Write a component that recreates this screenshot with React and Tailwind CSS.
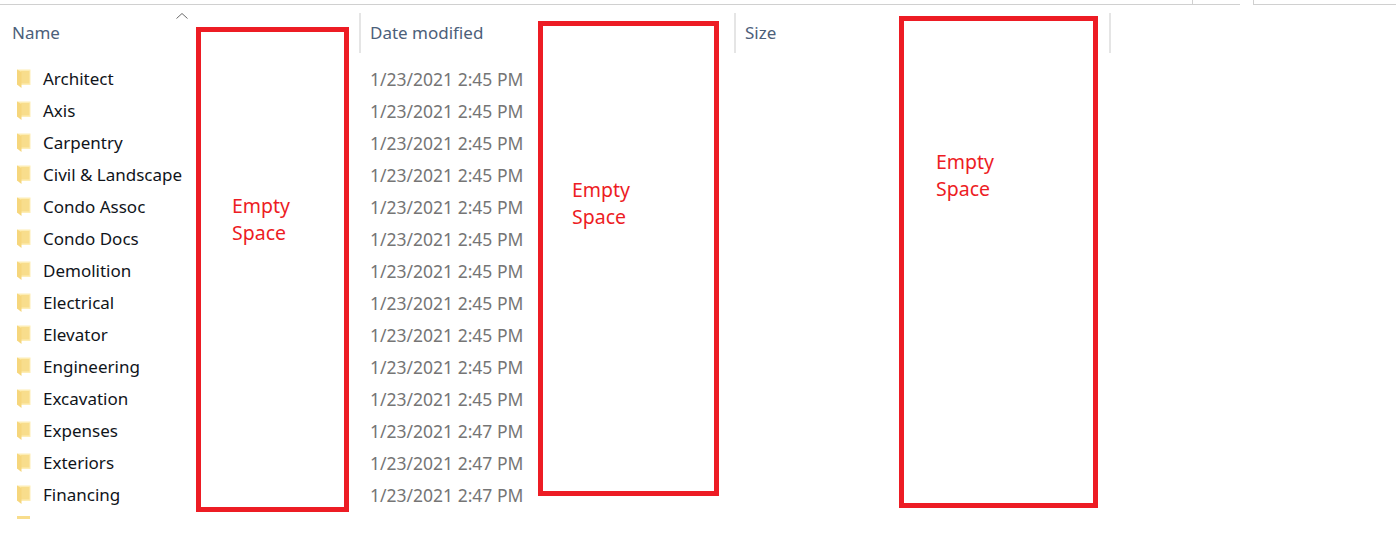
const folders = [
  ['Architect', '1/23/2021 2:45 PM'],
  ['Axis', '1/23/2021 2:45 PM'],
  ['Carpentry', '1/23/2021 2:45 PM'],
  ['Civil & Landscape', '1/23/2021 2:45 PM'],
  ['Condo Assoc', '1/23/2021 2:45 PM'],
  ['Condo Docs', '1/23/2021 2:45 PM'],
  ['Demolition', '1/23/2021 2:45 PM'],
  ['Electrical', '1/23/2021 2:45 PM'],
  ['Elevator', '1/23/2021 2:45 PM'],
  ['Engineering', '1/23/2021 2:45 PM'],
  ['Excavation', '1/23/2021 2:45 PM'],
  ['Expenses', '1/23/2021 2:47 PM'],
  ['Exteriors', '1/23/2021 2:47 PM'],
  ['Financing', '1/23/2021 2:47 PM'],
];

function FolderIcon() {
  return (
    <svg width="16" height="22" viewBox="0 0 16 22" className="shrink-0">
      <path d="M1 1.5h13.5v15.5H1z" fill="#fdedb5" />
      <path d="M5 3h8.5v12.5H5z" fill="#f8dd8c" />
      <path d="M1 1.5l4.5 2.5v16L1 16.5z" fill="#f6d67c" />
    </svg>
  );
}

function Header({ label, width, sorted }) {
  return (
    <div className={`relative flex items-center h-10 border-r-2 border-[#e5e5e5] ${width}`}>
      <span className="text-[#4c607a] text-[17px]">{label}</span>
      {sorted && (
        <svg width="14" height="8" viewBox="0 0 14 8" className="absolute left-[175px] -top-[1px]">
          <path d="M1.5 6.5L7 1.5l5.5 5" fill="none" stroke="#6b6b6b" strokeWidth="1" />
        </svg>
      )}
    </div>
  );
}

function EmptyBox({ className, noteClass }) {
  return (
    <div className={`absolute border-[5px] border-[#ed1c24] ${className}`}>
      <p className={`absolute text-[#ed1c24] text-[19.5px] leading-[27px] ${noteClass}`}>
        Empty<br />Space
      </p>
    </div>
  );
}

export default function App() {
  return (
    <div className="relative w-[1396px] h-[545px] overflow-hidden bg-white font-['Noto_Sans','Open_Sans',sans-serif]">
      {/* Top edge of the pane above */}
      <div className="flex h-[5px]">
        <div className="w-[1240px] border-b border-[#d0d0d0] flex justify-end">
          <div className="w-[48px] border-l border-[#d0d0d0]" />
        </div>
        <div className="w-[13px]" />
        <div className="flex-1 border-b border-l border-[#d0d0d0]" />
      </div>

      {/* Column headers */}
      <div className="flex mt-[8px]">
        <Header label="Name" width="w-[361px] pl-3" sorted />
        <Header label="Date modified" width="w-[375px] pl-[9px]" />
        <Header label="Size" width="w-[375px] pl-[9px]" />
      </div>

      {/* Rows */}
      <div className="mt-[10px] h-[482px] overflow-hidden">
        {folders.map(([name, date]) => (
          <div key={name} className="flex items-center h-8">
            <div className="flex items-center w-[370px] pl-[16px] gap-[11px]">
              <FolderIcon />
              <span className="text-[17px] text-[#10141a]">{name}</span>
            </div>
            <span className="text-[17.5px] text-[#757575]">{date}</span>
          </div>
        ))}
        <div className="pl-[17px] pt-[5px]">
          <div className="w-[13px] h-[3px] bg-[#f8dd8c]" />
        </div>
      </div>

      <EmptyBox className="left-[196px] top-[27px] w-[153px] h-[485px]" noteClass="left-[31px] top-[160px]" />
      <EmptyBox className="left-[538px] top-[21px] w-[181px] h-[475px]" noteClass="left-[29px] top-[150px]" />
      <EmptyBox className="left-[899px] top-[16px] w-[199px] h-[492px]" noteClass="left-[32px] top-[127px]" />
    </div>
  );
}
